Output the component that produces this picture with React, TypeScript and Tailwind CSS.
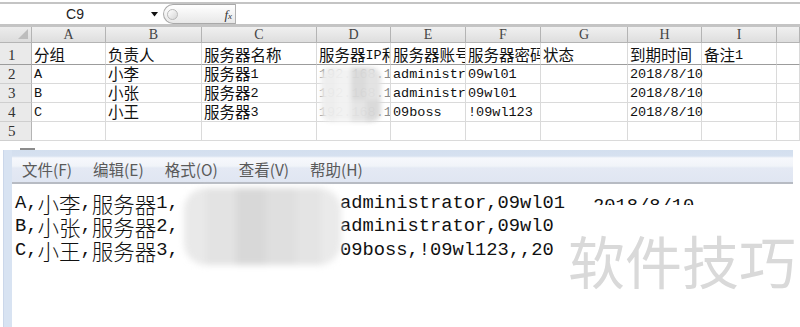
import React from "react";

const CJK_SPLIT = /([\u3000-\u303f\u4e00-\u9fff\uff00-\uffef]+)/;
const CJK_TEST = /[\u3000-\u303f\u4e00-\u9fff\uff00-\uffef]/;

function Mixed({ t, cjk, lat }: { t: string; cjk: string; lat: string }) {
  const parts = t.split(CJK_SPLIT).filter((p) => p.length > 0);
  return (
    <>
      {parts.map((p, i) => (
        <span key={i} className={CJK_TEST.test(p) ? cjk : lat}>
          {p}
        </span>
      ))}
    </>
  );
}

const cellCjk = "font-['Noto_Sans_CJK_SC',sans-serif] text-[15.5px] leading-none";
const cellLat = "font-['Liberation_Mono',monospace] text-[13.5px] leading-none";
const npCjk = "font-['Noto_Sans_CJK_SC',sans-serif] font-light text-[21.5px] leading-none";
const npLat = "font-['Liberation_Mono',monospace] text-[18.75px] leading-none";

const cols = ["A", "B", "C", "D", "E", "F", "G", "H", "I", ""];

const rows: string[][] = [
  ["分组", "负责人", "服务器名称", "服务器IP和端口", "服务器账号", "服务器密码", "状态", "到期时间", "备注1", ""],
  ["A", "小李", "服务器1", "192.168.100.10", "administrator", "09wl01", "", "2018/8/10", "", ""],
  ["B", "小张", "服务器2", "192.168.100.11", "administrator", "09wl01", "", "2018/8/10", "", ""],
  ["C", "小王", "服务器3", "192.168.1.'09", "09boss", "!09wl123", "", "2018/8/10", "", ""],
  ["", "", "", "", "", "", "", "", "", ""],
];

function cellClass(ri: number, ci: number): string {
  if (ri === 0)
    return "border-r border-b border-r-[#dadada] border-b-[#9c9c9c] flex items-end pl-[2px] pb-[2px] overflow-hidden whitespace-nowrap text-[#111]";
  if (ci === 3)
    return "border-r border-b border-[#dadada] flex items-end pl-[2px] pb-[2px] overflow-hidden whitespace-nowrap text-[#8a8a8a]";
  if (ci === 7)
    return "border-r border-b border-[#dadada] flex items-end pl-[2px] pb-[2px] overflow-visible whitespace-nowrap text-[#111]";
  return "border-r border-b border-[#dadada] flex items-end pl-[2px] pb-[2px] overflow-hidden whitespace-nowrap text-[#111]";
}

function FormulaBar() {
  return (
    <div className="flex flex-col">
      <div className="h-[2px] bg-white" />
      <div className="h-[2px] bg-[#c4c4c4]" />
      <div className="h-[20px] flex items-stretch bg-white">
        <div className="w-[150px] flex items-center justify-center font-['Liberation_Sans',sans-serif] text-[14px] text-[#222]">
          C9
        </div>
        <div className="w-[13px] flex items-center">
          <svg width="7" height="5" viewBox="0 0 7 5" className="ml-[1px]">
            <polygon points="0,0 7,0 3.5,4.5" fill="#111" />
          </svg>
        </div>
        <div className="w-[72px] flex items-center justify-between rounded-l-[10px] border border-r-0 border-[#a9a9a9] bg-gradient-to-b from-white to-[#e8e8e8] pl-[3px] pr-[3px]">
          <div className="w-[11px] h-[11px] rounded-full border border-[#b8b8b8] bg-gradient-to-br from-white to-[#d6d6d6]" />
          <span className="font-['Liberation_Serif',serif] italic text-[13px] text-[#333] leading-none">
            f<span className="text-[9px]">x</span>
          </span>
        </div>
        <div className="w-px bg-[#b0b0b0]" />
        <div className="flex-1" />
      </div>
      <div className="h-[3px] bg-[#c4c4c4]" />
    </div>
  );
}

function Sheet() {
  return (
    <div className="relative grid grid-cols-[32px_74px_96px_115px_74px_75px_75px_87px_74px_75px_1fr] grid-rows-[16px_22px_19px_19px_19px_19px]">
      <div className="relative border-r border-b border-[#b4b4b4] bg-gradient-to-b from-[#ececec] to-[#dcdcdc] flex items-end justify-end pr-[3px] pb-[3px]">
        <svg width="10" height="10" viewBox="0 0 10 10">
          <polygon points="0,10 10,10 10,0" fill="#bdbdbd" />
        </svg>
      </div>
      {cols.map((c, i) => (
        <div
          key={"h" + i}
          className="border-r border-b border-[#b4b4b4] bg-gradient-to-b from-[#f0f0f0] to-[#dedede] flex items-center justify-center font-['Liberation_Serif',serif] text-[14px] leading-none text-[#444]"
        >
          {c}
        </div>
      ))}
      {rows.map((r, ri) => (
        <React.Fragment key={"r" + ri}>
          <div
            className={
              ri === 0
                ? "border-r border-b border-r-[#b4b4b4] border-b-[#9c9c9c] bg-[#eaeaea] flex items-end pl-[8px] pb-[1px] font-['Liberation_Serif',serif] text-[15px] leading-none text-[#333]"
                : "border-r border-b border-r-[#b4b4b4] border-b-[#cfcfcf] bg-[#eaeaea] flex items-end pl-[8px] pb-[1px] font-['Liberation_Serif',serif] text-[15px] leading-none text-[#333]"
            }
          >
            {ri + 1}
          </div>
          {r.map((v, ci) => (
            <div key={"c" + ci} className={cellClass(ri, ci)}>
              <Mixed t={v} cjk={cellCjk} lat={cellLat} />
            </div>
          ))}
        </React.Fragment>
      ))}
      <div className="absolute left-[321px] top-[40px] w-[60px] h-[55px] rounded-[10px] blur-[2px] flex overflow-hidden opacity-95">
        <div className="flex-1 bg-[#eeeeee]" />
        <div className="flex-1 bg-[#f2f2f2]" />
        <div className="flex-1 flex flex-col">
          <div className="flex-[3] bg-[#dadada]" />
          <div className="flex-[2] bg-[#e4e4e4]" />
        </div>
        <div className="flex-1 flex flex-col">
          <div className="flex-[3] bg-[#e2e2e2]" />
          <div className="flex-[2] bg-[#d9d9d9]" />
        </div>
      </div>
    </div>
  );
}

function Notepad() {
  const menu = ["文件(F)", "编辑(E)", "格式(O)", "查看(V)", "帮助(H)"];
  return (
    <div className="flex flex-1 min-h-0">
      <div className="ml-[3px] w-[9px] bg-[#d8e3f2] border-l border-[#cbd7ea]" />
      <div className="flex-1 flex flex-col">
        <div className="w-[781px] h-[34px] border-b-2 border-[#b7bbc3] bg-[linear-gradient(to_bottom,#d3dfef_0px,#d6e1f0_6px,#f6f8fc_8px,#f1f4f9_16px,#e4e9f4_18px,#e0e6f2_32px)] flex items-center pl-[10px] pt-[8px] gap-[21px]">
          {menu.map((m) => (
            <span
              key={m}
              className="font-['Noto_Sans_CJK_SC',sans-serif] text-[15.5px] leading-none text-[#5a5a5a]"
            >
              {m}
            </span>
          ))}
        </div>
        <div className="relative flex-1 bg-white pt-[7.5px] pl-[3px] text-[#111]">
          <div className="h-[23.5px] flex items-center whitespace-nowrap">
            <div className="w-[325px] flex items-center">
              <Mixed t="A,小李,服务器1," cjk={npCjk} lat={npLat} />
            </div>
            <span className={npLat}>administrator,09wl01</span>
            <div className="ml-[28px] self-start mt-[2px] h-[11px] overflow-hidden">
              <span className={npLat}>2018/8/10</span>
            </div>
          </div>
          <div className="h-[23.5px] flex items-center whitespace-nowrap">
            <div className="w-[325px] flex items-center">
              <Mixed t="B,小张,服务器2," cjk={npCjk} lat={npLat} />
            </div>
            <span className={npLat}>administrator,09wl0</span>
          </div>
          <div className="h-[23.5px] flex items-center whitespace-nowrap">
            <div className="w-[325px] flex items-center">
              <Mixed t="C,小王,服务器3," cjk={npCjk} lat={npLat} />
            </div>
            <span className={npLat}>09boss,!09wl123,,20</span>
          </div>
          <div className="absolute left-[172px] top-[4px] w-[157px] h-[77px] rounded-[22px] blur-[3px] flex overflow-hidden">
            <div className="w-[22px] bg-[#e9e9e9]" />
            <div className="w-[30px] bg-[#e3e3e3]" />
            <div className="w-[30px] bg-[#d8d8d8]" />
            <div className="w-[30px] bg-[#dfdfdf]" />
            <div className="w-[25px] bg-[#e4e4e4]" />
            <div className="flex-1 bg-[#eaeaea]" />
          </div>
          <div className="absolute left-[556px] top-[47px] font-['Noto_Sans_CJK_SC',sans-serif] text-[57px] leading-none text-[#d9d9d9] whitespace-nowrap">
            软件技巧
          </div>
        </div>
      </div>
    </div>
  );
}

export default function App() {
  return (
    <div className="w-[800px] h-[327px] bg-white overflow-hidden flex flex-col font-['Liberation_Sans',sans-serif]">
      <FormulaBar />
      <Sheet />
      <div className="h-[9px] flex items-end">
        <div className="ml-[20px] w-[15px] h-[2px] bg-[#8c8c8c]" />
      </div>
      <Notepad />
    </div>
  );
}
